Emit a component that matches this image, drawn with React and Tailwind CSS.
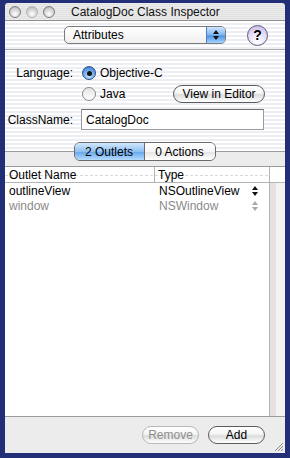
import React from 'react';

const font = "font-['Liberation_Sans',Arial,sans-serif]";

const Light = ({ dim }) => (
    <div
        className={`w-[12px] h-[12px] rounded-full border ${
            dim ? 'border-[#b4b4b4]' : 'border-[#7c7c7c]'
        } bg-[radial-gradient(circle_at_50%_70%,#ffffff_0,#d4d4d4_55%,#a8a8a8_100%)]`}
    />
);

const Radio = ({ on }) =>
    on ? (
        <div className="w-[14px] h-[14px] rounded-full border border-[#2d4f8a] bg-[radial-gradient(circle_at_50%_75%,#c7e3ff_0,#5f9fe6_60%,#2f6fc2_100%)] flex items-center justify-center">
            <div className="w-[5px] h-[5px] rounded-full bg-[#111]" />
        </div>
    ) : (
        <div className="w-[14px] h-[14px] rounded-full border border-[#8a8a8a] bg-[linear-gradient(to_bottom,#e4e4e4,#ffffff)]" />
    );

const Capsule = ({ children, w, disabled }) => (
    <div
        className={`${w} h-[18px] rounded-full border ${
            disabled ? 'border-[#b8b8b8] text-[#8e8e8e]' : 'border-[#5c5c5c] text-black'
        } bg-[linear-gradient(to_bottom,#ffffff_0,#f4f4f4_45%,#dcdcdc_55%,#ffffff_100%)] flex items-center justify-center text-[12px] leading-none`}
    >
        {children}
    </div>
);

const Arrows = ({ color }) => (
    <svg width="6" height="12" viewBox="0 0 6 12">
        <polygon points="3,1 6,5 0,5" fill={color} />
        <polygon points="0,7 6,7 3,11" fill={color} />
    </svg>
);

const rows = [
    { name: 'outlineView', type: 'NSOutlineView', active: true },
    { name: 'window', type: 'NSWindow', active: false }
];

const App = () => {
    return (
        <div className={`w-[290px] h-[458px] bg-[#222f76] pt-[3px] pb-[5px] px-[5px] flex flex-col ${font}`}>
            {/* title bar */}
            <div className="h-[18px] flex items-center border-b border-[#8e8e8e] bg-[repeating-linear-gradient(to_bottom,#ececec_0px,#ececec_1px,#e0e0e0_1px,#e0e0e0_2px)] rounded-t-[3px]">
                <div className="flex items-center gap-[5px] pl-[4px]">
                    <Light />
                    <Light dim />
                    <Light />
                </div>
                <div className="ml-[16px] text-[12px] text-[#111] leading-none">CatalogDoc Class Inspector</div>
            </div>

            {/* striped upper area */}
            <div className="h-[130px] bg-[repeating-linear-gradient(to_bottom,#ffffff_0px,#ffffff_2px,#edeef3_2px,#edeef3_4px)] flex flex-col text-[12px] text-black">
                <div className="h-[20px] mt-[4px] flex items-center">
                    <div className="ml-[59px] w-[162px] h-[18px] rounded-[5px] border border-[#7a7a7a] bg-[linear-gradient(to_bottom,#ffffff,#f0f0f0)] flex items-stretch overflow-hidden">
                        <div className="flex-1 pl-[8px] flex items-center leading-none">Attributes</div>
                        <div className="w-[19px] border-l border-[#4d7fbe] bg-[linear-gradient(to_bottom,#cfe6ff_0,#7fb6f0_50%,#4f93e0_55%,#a7d4ff_100%)] flex items-center justify-center">
                            <Arrows color="#111" />
                        </div>
                    </div>
                    <div className="ml-[21px] w-[21px] h-[21px] rounded-full border border-[#5f5874] bg-[radial-gradient(circle_at_50%_80%,#ffffff_0,#e4dcf6_55%,#b9acdc_100%)] flex items-center justify-center text-[14px] font-bold leading-none">
                        ?
                    </div>
                </div>

                <div className="mt-[4px] h-[2px] border-t border-[#a9a9a9] bg-white" />

                <div className="mt-[15px] h-[14px] flex items-center">
                    <div className="w-[68px] text-right leading-none">Language:</div>
                    <div className="ml-[9px]"><Radio on /></div>
                    <div className="ml-[4px] leading-none">Objective-C</div>
                </div>

                <div className="mt-[5px] h-[18px] flex items-center">
                    <div className="ml-[77px]"><Radio /></div>
                    <div className="ml-[4px] leading-none">Java</div>
                    <div className="ml-auto mr-[20px]">
                        <Capsule w="w-[92px]">View in Editor</Capsule>
                    </div>
                </div>

                <div className="mt-[6px] h-[21px] flex items-center">
                    <div className="w-[68px] text-right leading-none">ClassName:</div>
                    <div className="ml-[8px] w-[183px] h-[21px] bg-white border border-[#9a9a9a] border-t-[#6e6e6e] flex items-center pl-[4px] leading-none">
                        CatalogDoc
                    </div>
                </div>
            </div>

            {/* tab area */}
            <div className="flex-1 flex flex-col bg-[#ececec] border-t border-[#9c9c9c]">
                <div className="-mt-[10px] flex justify-center pl-[1px] relative">
                    <div className="ml-[-2px] h-[19px] w-[142px] rounded-[6px] border border-[#6a6a6a] flex overflow-hidden text-[12px] leading-none">
                        <div className="w-[70px] border-r border-[#6a6a6a] bg-[linear-gradient(to_bottom,#d3e8fd_0,#8fc0f2_50%,#6aa9ec_55%,#b6dcff_100%)] flex items-center justify-center">
                            2 Outlets
                        </div>
                        <div className="flex-1 bg-[linear-gradient(to_bottom,#ffffff_0,#f6f6f6_50%,#e6e6e6_55%,#ffffff_100%)] flex items-center justify-center">
                            0 Actions
                        </div>
                    </div>
                </div>

                {/* table */}
                <div className="mt-[5px] flex-1 flex border-t border-b border-[#9a9a9a] bg-white text-[12px] leading-none">
                    <div className="flex-1 flex flex-col">
                        <div className="h-[16px] flex border-b border-[#b4b4b4] bg-[repeating-linear-gradient(90deg,#d9d9d9_0px,#d9d9d9_3px,#ffffff_3px,#ffffff_5px)] bg-no-repeat bg-size-[100%_1px] bg-position-[0_8px]">
                            <div className="w-[150px] border-r border-[#b4b4b4] pl-[4px] flex items-center">Outlet Name</div>
                            <div className="flex-1 pl-[3px] flex items-center">Type</div>
                        </div>
                        {rows.map((row) => (
                            <div
                                key={row.name}
                                className={`h-[15px] flex items-center ${row.active ? 'text-black' : 'text-[#8a8a8a]'}`}
                            >
                                <div className="w-[150px] pl-[4px]">{row.name}</div>
                                <div className="flex-1 pl-[4px]">{row.type}</div>
                                <div className="w-[17px] flex items-center">
                                    <Arrows color={row.active ? '#111' : '#a8a8a8'} />
                                </div>
                            </div>
                        ))}
                    </div>
                    <div className="w-[16px] flex flex-col border-l border-[#b4b4b4]">
                        <div className="h-[16px] border-b border-[#b4b4b4] bg-white" />
                        <div className="flex-1 flex">
                            <div className="w-[6px] bg-[#e6e2e4]" />
                            <div className="flex-1 bg-[#f5f2f4]" />
                        </div>
                    </div>
                </div>

                {/* bottom buttons */}
                <div className="h-[36px] flex items-start pt-[9px] relative">
                    <div className="ml-auto flex gap-[9px] mr-[20px]">
                        <Capsule w="w-[57px]" disabled>Remove</Capsule>
                        <Capsule w="w-[57px]">Add</Capsule>
                    </div>
                    <svg className="absolute right-[1px] bottom-[1px]" width="11" height="11" viewBox="0 0 11 11">
                        <line x1="10" y1="2" x2="2" y2="10" stroke="#8a8a8a" strokeWidth="1" />
                        <line x1="10" y1="5" x2="5" y2="10" stroke="#8a8a8a" strokeWidth="1" />
                        <line x1="10" y1="8" x2="8" y2="10" stroke="#8a8a8a" strokeWidth="1" />
                    </svg>
                </div>
            </div>
        </div>
    );
};

export default App;
